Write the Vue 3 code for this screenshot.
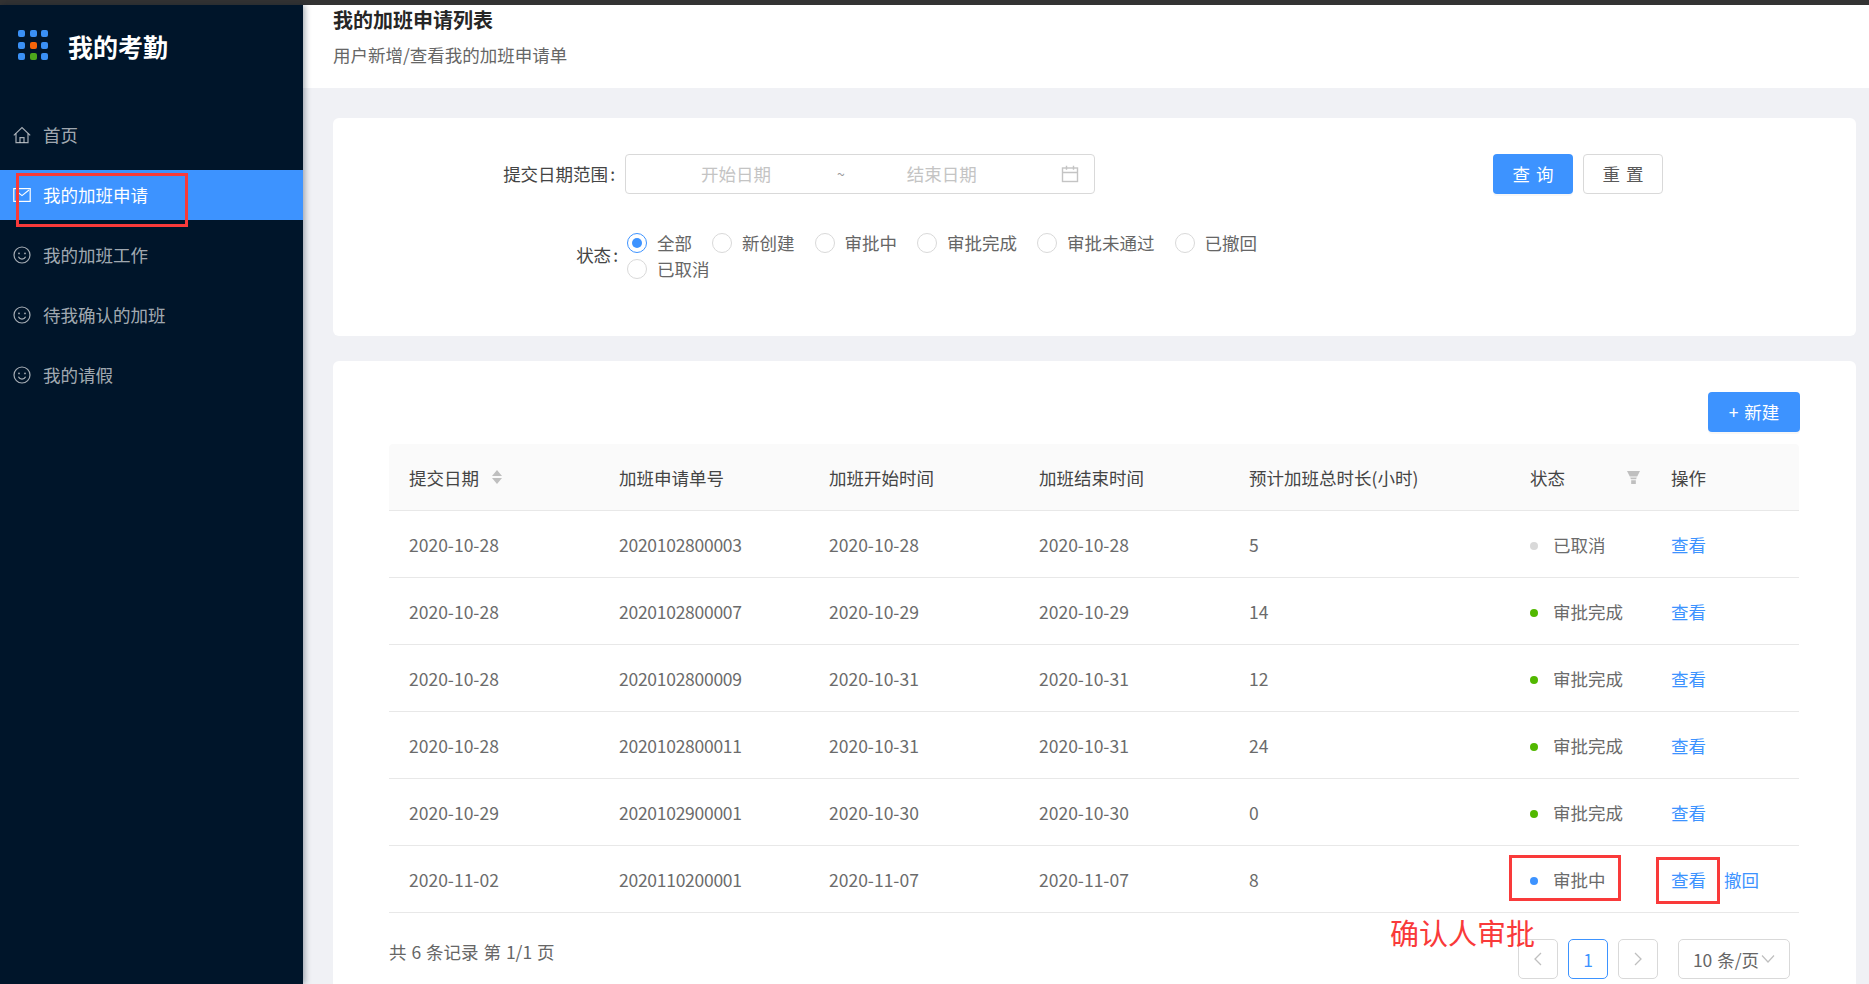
<script setup>
const nav = [
  { label: '首页', icon: 'home' },
  { label: '我的加班申请', icon: 'mail', active: true },
  { label: '我的加班工作', icon: 'smile' },
  { label: '待我确认的加班', icon: 'smile' },
  { label: '我的请假', icon: 'smile' }
]
const dots = ['b', 'b', 'b', 'b', 'o', 'b', 'b', 'g', 'b']
const radiosRow = ['全部', '新创建', '审批中', '审批完成', '审批未通过', '已撤回', '已取消']
const rows = [
  ['2020-10-28', '2020102800003', '2020-10-28', '2020-10-28', '5', '已取消', 'grey'],
  ['2020-10-28', '2020102800007', '2020-10-29', '2020-10-29', '14', '审批完成', 'green'],
  ['2020-10-28', '2020102800009', '2020-10-31', '2020-10-31', '12', '审批完成', 'green'],
  ['2020-10-28', '2020102800011', '2020-10-31', '2020-10-31', '24', '审批完成', 'green'],
  ['2020-10-29', '2020102900001', '2020-10-30', '2020-10-30', '0', '审批完成', 'green'],
  ['2020-11-02', '2020110200001', '2020-11-07', '2020-11-07', '8', '审批中', 'blue']
]
</script>

<template>
  <div class="page">
    <div class="topbar"></div>
    <div class="body">
      <aside class="sider">
        <div class="logo">
          <div class="logo-grid">
            <i v-for="(d, i) in dots" :key="i" :class="['dot', d]"></i>
          </div>
          <span class="logo-text">我的考勤</span>
        </div>
        <nav class="menu">
          <div v-for="n in nav" :key="n.label" :class="['item', { active: n.active }]">
            <svg class="nav-icon" viewBox="0 0 18 18" fill="none" stroke="currentColor" stroke-width="1.2">
              <template v-if="n.icon === 'home'">
                <path d="M.8 9.400 9 1.600l8.200 7.800" />
                <path d="M3 7.600v9h12v-9" />
                <path d="M7 16.600v-5h4v5" />
              </template>
              <template v-else-if="n.icon === 'mail'">
                <rect x=".8" y="2.600" width="16.400" height="12.800" />
                <path d="M5 6.400l4 3.200 7-5.600" />
              </template>
              <template v-else>
                <circle cx="9" cy="9" r="8" />
                <circle cx="6" cy="7.400" r=".9" fill="currentColor" stroke="none" />
                <circle cx="12" cy="7.400" r=".9" fill="currentColor" stroke="none" />
                <path d="M5.400 10.800c.8 1.600 2.100 2.400 3.600 2.400s2.800-.8 3.600-2.400" />
              </template>
            </svg>
            <span class="nav-text">{{ n.label }}</span>
          </div>
        </nav>
        <div class="mark mark-nav"></div>
      </aside>

      <main class="main">
        <header class="head">
          <h1>我的加班申请列表</h1>
          <p>用户新增/查看我的加班申请单</p>
        </header>

        <div class="content">
          <section class="card filter">
            <div class="filter-row date-row">
              <label class="f-label">提交日期范围<span class="colon">:</span></label>
              <div class="range">
                <span class="ph ph1">开始日期</span>
                <span class="tilde">~</span>
                <span class="ph ph2">结束日期</span>
                <svg class="cal" viewBox="0 0 18 18" fill="none" stroke="#c4c4c4" stroke-width="1.400">
                  <rect x="1.500" y="3" width="15" height="13.500" />
                  <path d="M1.500 7.500h15M5.500 .8v4M12.500 .8v4" />
                </svg>
              </div>
              <div class="btns">
                <button class="btn primary">查 询</button>
                <button class="btn ghost">重 置</button>
              </div>
            </div>
            <div class="filter-row status-row">
              <label class="f-label s-label">状态<span class="colon">:</span></label>
              <div class="radios">
                <span v-for="(r, i) in radiosRow" :key="r" class="radio">
                  <i :class="['circle', { on: i === 0 }]"></i>{{ r }}
                </span>
              </div>
            </div>
          </section>

          <section class="card list">
            <div class="tools">
              <button class="btn primary new">+ 新建</button>
            </div>
            <div class="table">
              <div class="tr th">
                <div class="c c1">提交日期
                  <svg class="sort" viewBox="0 0 10 16" fill="#bfbfbf"><path d="M5 1l5 6H0zM5 15l5-6H0z" /></svg>
                </div>
                <div class="c c2">加班申请单号</div>
                <div class="c c3">加班开始时间</div>
                <div class="c c4">加班结束时间</div>
                <div class="c c5">预计加班总时长(小时)</div>
                <div class="c c6 status-head">状态
                  <svg class="filter-ic" viewBox="0 0 14 14" fill="#bfbfbf"><path d="M0 0h14l-3 6H3zM3.500 7h7L9.800 9H4.200zM4.500 10h5v4h-5z" /></svg>
                </div>
                <div class="c c7">操作</div>
              </div>
              <div v-for="(r, i) in rows" :key="r[1]" class="tr">
                <div class="c c1">{{ r[0] }}</div>
                <div class="c c2 num">{{ r[1] }}</div>
                <div class="c c3">{{ r[2] }}</div>
                <div class="c c4">{{ r[3] }}</div>
                <div class="c c5">{{ r[4] }}</div>
                <div class="c c6 st"><i :class="['st-dot', r[6]]"></i>{{ r[5] }}</div>
                <div class="c c7 ops">
                  <a>查看</a><a v-if="i === 5">撤回</a>
                </div>
              </div>
              <div class="mark mark-st"></div>
              <div class="mark mark-op"></div>
            </div>
            <div class="foot">
              <span class="total">共 6 条记录 第 1/1 页</span>
              <div class="pager">
                <span class="pg">
                  <svg viewBox="0 0 10 16" fill="none" stroke="#bfbfbf" stroke-width="1.300"><path d="M8 2 2 8l6 6" /></svg>
                </span>
                <span class="pg cur">1</span>
                <span class="pg">
                  <svg viewBox="0 0 10 16" fill="none" stroke="#bfbfbf" stroke-width="1.300"><path d="M2 2l6 6-6 6" /></svg>
                </span>
                <span class="size">10 条/页
                  <svg viewBox="0 0 14 10" fill="none" stroke="#bfbfbf" stroke-width="1.200"><path d="M1 1.500 7 8l6-6.500" /></svg>
                </span>
              </div>
              <span class="note">确认人审批</span>
            </div>
          </section>
        </div>
      </main>
    </div>
  </div>
</template>

<style>
html, body { margin: 0; height: 100%; overflow: hidden; }
</style>

<style scoped>
.page {
  height: 984px;
  display: flex;
  flex-direction: column;
  overflow: hidden;
  font-family: "Noto Sans CJK SC", "Noto Sans", sans-serif;
  font-size: 17.5px;
  color: #595959;
}
.topbar { height: 5px; background: #333; flex: none; }
.body { flex: 1; display: flex; min-height: 0; }

.sider {
  width: 303px;
  flex: none;
  background: #00152a;
  position: relative;
  z-index: 2;
  box-shadow: 2px 0 6px rgba(0, 21, 41, .35);
}
.logo { height: 85px; display: flex; align-items: center; padding-left: 18px; }
.logo-grid { width: 30px; display: grid; grid-template-columns: repeat(3, 7px); gap: 4.500px; margin-top: -5px; }
.dot { height: 7px; border-radius: 2px; background: #3a90f5; }
.dot.o { background: #f5650a; }
.dot.g { background: #4ea81c; }
.logo-text { margin-left: 20px; margin-bottom: 2px; font-size: 25px; font-weight: 700; color: #fff; line-height: 1; }
.menu { padding-top: 20px; }
.item {
  height: 50px;
  margin-bottom: 10px;
  padding-left: 13px;
  display: flex;
  align-items: center;
  color: rgba(255, 255, 255, .65);
}
.item.active { background: #3d93ff; color: #fff; }
.nav-icon { width: 18px; height: 18px; margin-right: 12px; flex: none; }
.nav-text { padding-bottom: 2px; }

.mark { position: absolute; border: 3px solid #f93a3a; box-sizing: border-box; }
.mark-nav { left: 16px; top: 168px; width: 172px; height: 54px; }

.main { flex: 1; min-width: 0; display: flex; flex-direction: column; background: #f0f1f5; }
.head { height: 83px; flex: none; background: #fff; padding-left: 30px; box-sizing: border-box; }
.head h1 { margin: 0; padding-top: 1px; font-size: 20px; line-height: 28px; font-weight: 700; color: #262626; }
.head p { margin: 8px 0 0; line-height: 26px; color: #666; }

.content { flex: 1; padding: 30px 13px 0 30px; min-height: 0; }
.card { background: #fff; border-radius: 6px; }
.filter { height: 218px; box-sizing: border-box; padding-top: 36px; margin-bottom: 25px; }
.filter-row { display: flex; }
.date-row { align-items: center; height: 40px; }
.f-label { width: 282px; text-align: right; color: #444; flex: none; padding-bottom: 1px; }
.colon { margin-left: 2px; }
.range {
  width: 470px;
  height: 40px;
  margin-left: 10px;
  box-sizing: border-box;
  border: 1px solid #d9d9d9;
  border-radius: 4px;
  position: relative;
  display: flex;
  align-items: center;
  color: #c4c4c4;
}
.ph { padding-bottom: 1px; }
.ph1 { margin-left: 75px; }
.tilde { margin-left: 66px; font-size: 14px; color: #999; }
.ph2 { margin-left: 62px; }
.cal { width: 18px; height: 18px; margin-left: 84px; }
.btns { margin-left: 398px; display: flex; gap: 10px; }
.btn {
  width: 80px;
  height: 40px;
  box-sizing: border-box;
  border-radius: 4px;
  font: inherit;
  padding: 0 0 1px;
  border: 1px solid transparent;
  line-height: 1;
  word-spacing: 2px;
}
.btn.primary { background: #3d93ff; color: #fff; box-shadow: 0 2px 0 rgba(0, 0, 0, .03); }
.btn.ghost { background: #fff; border-color: #d9d9d9; color: #595959; }
.btn.primary.new { width: 92px; }
.status-row { margin-top: 35px; }
.s-label { width: 285px; padding-top: 13px; padding-bottom: 0; line-height: 26px; }
.radios { width: 660px; margin-left: 9px; display: flex; flex-wrap: wrap; row-gap: 0; }
.radio { display: flex; align-items: center; height: 26px; margin-right: 20px; color: #666; white-space: nowrap; }
.circle { width: 20px; height: 20px; box-sizing: border-box; border: 1px solid #d9d9d9; border-radius: 50%; margin: 2px 10px 0 0; position: relative; }
.circle.on { border-color: #3d93ff; }
.circle.on::after { content: ""; position: absolute; inset: 4px; border-radius: 50%; background: #3d93ff; }

.list { height: 660px; box-sizing: border-box; padding: 31px 56px 0; }
.tools { display: flex; justify-content: flex-end; height: 40px; margin-bottom: 12px; }
.table { position: relative; margin-right: 1px; }
.tr { display: flex; height: 67px; box-sizing: border-box; border-bottom: 1px solid #e8e8e8; align-items: center; color: #6b6b6b; }
.th { background: #fafafa; color: #444; border-radius: 4px 4px 0 0; }
.c { box-sizing: border-box; padding-left: 20px; white-space: nowrap; display: flex; align-items: center; }
.c1, .c2, .c3, .c4 { width: 210px; }
.c5 { width: 281px; }
.c6 { width: 141px; }
.c7 { width: 148px; }
.num { letter-spacing: -.27px; }
.sort { width: 10px; height: 16px; margin-left: 13px; }
.status-head { position: relative; }
.filter-ic { position: absolute; right: 11px; top: 50%; margin-top: -6px; width: 13px; height: 13px; }
.st-dot { width: 8px; height: 8px; border-radius: 50%; margin: 3px 15px 0 0; }
.st-dot.grey { background: #d9d9d9; }
.st-dot.green { background: #52b800; }
.st-dot.blue { background: #3d93ff; }
.ops { gap: 18px; }
.ops a { color: #3d93ff; }
.mark-st { left: 1120px; top: 411px; width: 112px; height: 46px; }
.mark-op { left: 1267px; top: 413px; width: 64px; height: 47px; }

.foot { position: relative; display: flex; justify-content: space-between; padding-top: 26px; }
.total { line-height: 26px; color: #666; word-spacing: 1px; }
.pager { display: flex; gap: 10px; margin-right: 10px; }
.pg {
  width: 40px;
  height: 40px;
  box-sizing: border-box;
  border: 1px solid #d9d9d9;
  border-radius: 5px;
  display: flex;
  align-items: center;
  justify-content: center;
}
.pg svg { width: 10px; height: 16px; }
.pg.cur { border-color: #3d93ff; color: #3d93ff; }
.size {
  width: 112px;
  height: 40px;
  margin-left: 10px;
  box-sizing: border-box;
  border: 1px solid #d9d9d9;
  border-radius: 5px;
  display: flex;
  align-items: center;
  justify-content: center;
  gap: 2px;
  color: #666;
  word-spacing: 1px;
}
.size svg { width: 14px; height: 10px; }
.note {
  position: absolute;
  left: 1001px;
  top: -1px;
  font-size: 29px;
  line-height: 40px;
  color: #f93a3a;
  white-space: nowrap;
}
</style>
